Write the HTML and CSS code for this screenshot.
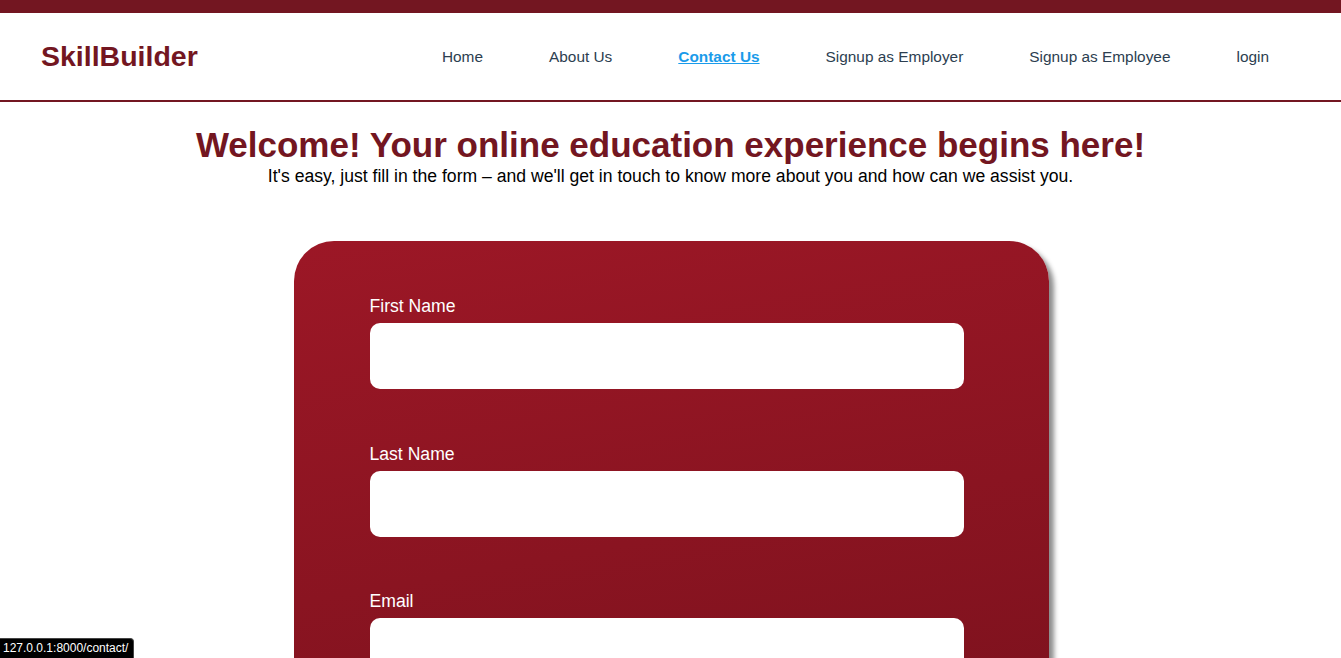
FILE: index.html
```html
<!DOCTYPE html>
<html lang="en">
<head>
<meta charset="utf-8">
<title>SkillBuilder - Contact Us</title>
<link rel="stylesheet" href="styles.css">
</head>
<body>
<div class="topbar"></div>
<header class="header">
  <a class="logo" href="#">SkillBuilder</a>
  <nav class="nav">
    <a class="nav-link" href="#">Home</a>
    <a class="nav-link" href="#">About Us</a>
    <a class="nav-link active" href="#">Contact Us</a>
    <a class="nav-link" href="#">Signup as Employer</a>
    <a class="nav-link" href="#">Signup as Employee</a>
    <a class="nav-link" href="#">login</a>
  </nav>
</header>
<main class="main">
  <h1 class="title">Welcome! Your online education experience begins here!</h1>
  <p class="subtitle">It's easy, just fill in the form – and we'll get in touch to know more about you and how can we assist you.</p>
  <form class="card">
    <div class="field">
      <label class="label" for="fn">First Name</label>
      <input class="input" id="fn" type="text">
    </div>
    <div class="field">
      <label class="label" for="ln">Last Name</label>
      <input class="input" id="ln" type="text">
    </div>
    <div class="field">
      <label class="label" for="em">Email</label>
      <input class="input" id="em" type="email">
    </div>
    <div class="field">
      <label class="label" for="ph">Phone</label>
      <input class="input" id="ph" type="text">
    </div>
  </form>
</main>
<div class="status">127.0.0.1:8000/contact/</div>
</body>
</html>
```
FILE: styles.css
```css
* { box-sizing: border-box; }
html, body { margin: 0; padding: 0; }
body {
  font-family: "Liberation Sans", Arial, sans-serif;
  background: #fff;
  color: #000;
}
.topbar {
  height: 13px;
  background: #731621;
}
.header {
  height: 89px;
  border-bottom: 2px solid #731621;
  display: flex;
  align-items: center;
  justify-content: space-between;
  padding: 0 72px 0 41px;
}
.logo {
  font-size: 28.5px;
  font-weight: bold;
  color: #731621;
  text-decoration: none;
}
.nav {
  display: flex;
  gap: 66px;
}
.nav-link {
  font-size: 15.4px;
  color: #2c3e50;
  text-decoration: none;
}
.nav-link.active {
  color: #1a9bea;
  font-weight: bold;
  text-decoration: underline;
}
.main {
  display: flex;
  flex-direction: column;
  align-items: center;
  padding-top: 22px;
}
.title {
  margin: 0;
  font-size: 35px;
  line-height: 42px;
  font-weight: bold;
  color: #731621;
}
.subtitle {
  margin: 0;
  font-size: 17.6px;
  line-height: 20px;
}
.card {
  margin-top: 55px;
  width: 755px;
  margin-left: 1px;
  border-radius: 40px 40px 0 0;
  background: linear-gradient(170deg, #9c1726 0%, #8a1421 45%, #74101b 100%);
  box-shadow: 5px 5px 5px rgba(0, 0, 0, 0.45);
  padding: 55px 85px 80px 76px;
  display: flex;
  flex-direction: column;
  gap: 54.5px;
}
.field {
  display: flex;
  flex-direction: column;
}
.label {
  color: #fff;
  font-size: 17.6px;
  line-height: 20px;
  margin-bottom: 7px;
}
.input {
  width: 594px;
  height: 66px;
  border: none;
  border-radius: 10px;
  background: #fff;
  font-size: 16px;
  padding: 0 14px;
}
.status {
  position: fixed;
  left: 0;
  bottom: 0;
  background: #000;
  color: #fff;
  font-family: "Liberation Sans", Arial, sans-serif;
  font-size: 12px;
  line-height: 19px;
  padding: 0 5px 0 3px;
  border-top-right-radius: 4px;
  border-top: 1px solid #444;
  border-right: 1px solid #444;
}
```
